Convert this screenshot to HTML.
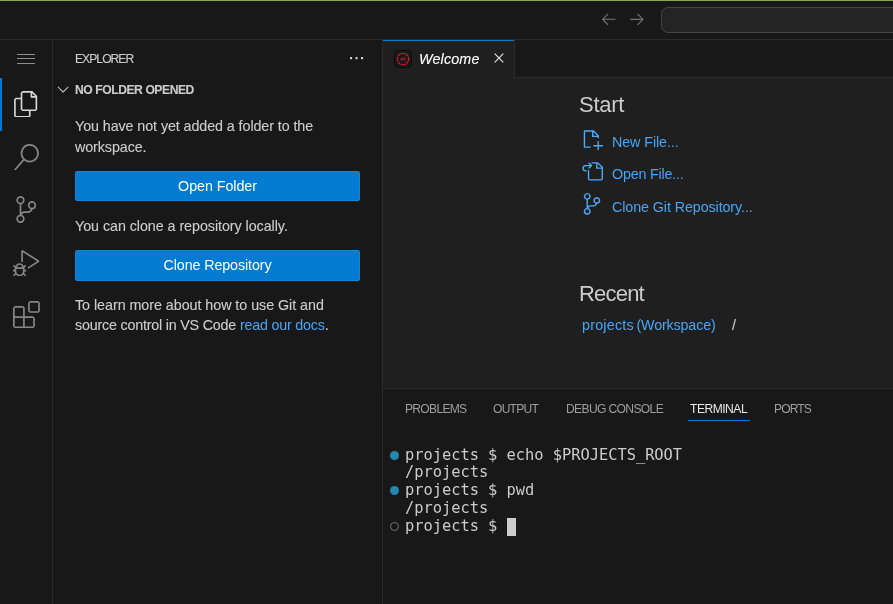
<!DOCTYPE html>
<html lang="en">
<head>
<meta charset="utf-8">
<title>Welcome</title>
<style>
*{box-sizing:border-box;margin:0;padding:0}
html,body{width:893px;height:604px;overflow:hidden;background:#181818}
body{position:relative;font-family:"Liberation Sans",sans-serif;font-size:14.3px;color:#cccccc}
.abs{position:absolute}
svg{display:block;position:absolute}
.t{-webkit-text-stroke:0.12px currentColor;position:absolute;white-space:nowrap;line-height:1;will-change:transform}
/* title bar */
#topline{left:0;top:0;width:893px;height:1px;background:#82ad4a}
#topshade{left:0;top:1px;width:893px;height:1px;background:#181818}
#titlebar{left:0;top:0;width:893px;height:40px;background:#181818;border-bottom:1px solid #2b2b2b}
#cmdcenter{left:661px;top:7px;width:260px;height:26px;background:#242424;border:1px solid #444444;border-radius:6.6px}
/* activity bar */
#activity{left:0;top:40px;width:53px;height:564px;background:#181818;border-right:1px solid #2b2b2b}
#actind{left:0;top:78px;width:2px;height:53px;background:#0078d4}
/* sidebar */
#sidebar{left:53px;top:40px;width:330px;height:564px;background:#181818;border-right:1px solid #2b2b2b}
.btn{will-change:transform;position:absolute;left:75px;width:285px;height:30px;background:#037bd1;border-radius:2.2px;color:#ffffff;text-align:center;line-height:28px;font-size:14.3px;border:1px solid rgba(255,255,255,0.07)}
.link{color:#48a5f5;-webkit-text-stroke:0}
/* editor */
#editor{left:383px;top:40px;width:510px;height:348px;background:#1f1f1f}
#tabbar{left:383px;top:40px;width:510px;height:38px;background:#181818;border-bottom:1px solid #2b2b2b}
#tab{left:383px;top:40px;width:132px;height:38px;background:#1f1f1f;border-right:1px solid #2b2b2b}
#tabtop{left:383px;top:40px;width:131px;height:1px;background:#0078d4}
/* panel */
#panel{left:383px;top:388px;width:510px;height:216px;background:#181818;border-top:1px solid #2b2b2b}
.ptab{-webkit-text-stroke:0;font-size:12.1px;color:#9d9d9d;letter-spacing:-0.68px}
.term{-webkit-text-stroke:0;font-family:"DejaVu Sans Mono","Liberation Mono",monospace;font-size:15.4px;color:#cccccc;letter-spacing:-0.03px}
</style>
</head>
<body>
<div class="abs" id="titlebar"></div>
<div class="abs" id="topline"></div>
<div class="abs" id="topshade"></div>
<div class="abs" id="cmdcenter"></div>
<!-- nav arrows -->
<svg style="left:600.1px;top:10.3px" width="17.6" height="17.6" viewBox="0 0 16 16" fill="#757575"><path d="M7 3.093l-5 5V8.8l5 5 .707-.707-4.146-4.147H14v-1H3.56L7.708 3.8 7 3.093z"/></svg>
<svg style="left:628.3px;top:10.3px" width="17.6" height="17.6" viewBox="0 0 16 16" fill="#757575"><path d="M9 13.887l5-5V8.18l-5-5-.707.707 4.146 4.147H2v1h10.44l-4.147 4.146.707.707z"/></svg>

<div class="abs" id="activity"></div>
<div class="abs" id="actind"></div>
<!-- menu -->
<svg style="left:17px;top:50px" width="18" height="16" viewBox="0 0 18 16" fill="#8e8e8e"><rect x="0" y="4" width="18" height="1"/><rect x="0" y="8" width="18" height="1"/><rect x="0" y="13" width="18" height="1"/></svg>
<!-- files -->
<svg style="left:13.2px;top:90.7px" width="26.4" height="26.8" preserveAspectRatio="none" viewBox="0 0 24 24" fill="#d7d7d7"><path d="M17.5 0h-9L7 1.5V6H2.5L1 7.500v15.070L2.500 24h12.070L16 22.570V18h4.700l1.300-1.430V4.500L17.500 0zm0 2.120l2.380 2.380H17.500V2.120zm-3 20.380h-12v-15H7v9.070L8.500 18h6v4.500zm6-6h-12v-15H16V6h4.500v10.500z"/></svg>
<!-- search -->
<svg style="left:13.2px;top:143.5px" width="26.4" height="26.8" preserveAspectRatio="none" viewBox="0 0 24 24" fill="#868686"><path d="M15.250 0a8.250 8.250 0 0 0-6.180 13.720L1 22.880l1.120 1 8.050-9.120A8.251 8.251 0 1 0 15.250.010V0zm0 15a6.750 6.750 0 1 1 0-13.500 6.750 6.750 0 0 1 0 13.500z"/></svg>
<!-- source control -->
<svg style="left:12.9px;top:195.8px" width="26.4" height="27.1" preserveAspectRatio="none" viewBox="0 0 24 24" fill="#868686"><path d="M21.007 8.222A3.738 3.738 0 0 0 15.045 5.200a3.737 3.737 0 0 0 1.156 6.583 2.988 2.988 0 0 1-2.668 1.670h-2.990a4.456 4.456 0 0 0-2.989 1.165V7.400a3.737 3.737 0 1 0-1.494 0v9.117a3.776 3.776 0 1 0 1.816.099 2.990 2.990 0 0 1 2.668-1.667h2.990a4.484 4.484 0 0 0 4.223-3.039 3.736 3.736 0 0 0 3.250-3.687zM4.565 3.738a2.242 2.242 0 1 1 4.484 0 2.242 2.242 0 0 1-4.484 0zm4.484 16.441a2.242 2.242 0 1 1-4.484 0 2.242 2.242 0 0 1 4.484 0zm8.221-9.715a2.242 2.242 0 1 1 0-4.485 2.242 2.242 0 0 1 0 4.485z"/></svg>
<!-- debug -->
<svg style="left:13.3px;top:249.9px" width="26.4" height="26.4" viewBox="0 0 24 24" fill="#868686"><path d="M10.940 13.500l-1.320 1.320a3.730 3.730 0 0 0-7.240 0L1.060 13.500 0 14.560l1.720 1.720-.220.220V18H0v1.500h1.500v.080c.077.489.214.966.410 1.420L0 22.940 1.060 24l1.650-1.650A4.308 4.308 0 0 0 6 24a4.310 4.310 0 0 0 3.290-1.650L10.940 24 12 22.940 10.090 21c.198-.464.336-.951.410-1.450v-.100H12V18h-1.500v-1.500l-.220-.220L12 14.560l-1.060-1.060zM6 13.500a2.250 2.250 0 0 1 2.250 2.250h-4.500A2.250 2.250 0 0 1 6 13.500zm3 6a3.330 3.330 0 0 1-3 3 3.330 3.330 0 0 1-3-3v-2.250h6v2.250zm14.760-9.900v1.260L13.500 17.370V15.600l8.500-5.370L9 2v9.460a5.070 5.070 0 0 0-1.500-.720V.630L8.640 0l15.120 9.600z"/></svg>
<!-- extensions -->
<svg style="left:13.2px;top:300.9px" width="26.9" height="27.1" preserveAspectRatio="none" viewBox="0 0 24 24" fill="#868686"><path d="M13.500 1.500L15 0h7.500L24 1.500V9l-1.500 1.500H15L13.500 9V1.500zm1.500 0V9h7.500V1.500H15zM0 15V6l1.500-1.500H9L10.500 6v7.500H18l1.500 1.500v7.500L18 24H1.500L0 22.500V15zm9-1.500V6H1.500v7.500H9zM9 15H1.500v7.500H9V15zm1.500 7.500H18V15h-7.500v7.500z"/></svg>

<div class="abs" id="sidebar"></div>
<div class="t" id="explorer" style="left:75px;top:53px;font-size:12.1px;letter-spacing:-0.95px;color:#cccccc">EXPLORER</div>
<svg style="left:348px;top:50px" width="18" height="16" viewBox="0 0 18 16" fill="#d0d0d0"><rect x="2" y="7" width="2.1" height="2.2"/><rect x="7.5" y="7" width="2.1" height="2.2"/><rect x="13" y="7" width="2.1" height="2.2"/></svg>
<svg style="left:53.9px;top:80.3px" width="18.4" height="18" viewBox="0 0 16 16" fill="#cccccc"><path d="M7.976 10.072l4.357-4.357.62.618L8.284 11h-.618L3 6.333l.619-.618 4.357 4.357z"/></svg>
<div class="t" id="nofolder" style="left:75px;top:84px;font-size:12.1px;font-weight:bold;letter-spacing:-0.42px">NO FOLDER OPENED</div>
<div class="t" id="p1a" style="left:75px;top:119px;letter-spacing:-0.08px">You have not yet added a folder to the</div>
<div class="t" id="p1b" style="left:75px;top:140px;letter-spacing:-0.08px">workspace.</div>
<div class="btn" id="btn1" style="top:171px;letter-spacing:-0.06px">Open Folder</div>
<div class="t" id="p2" style="left:75px;top:219px;letter-spacing:-0.05px">You can clone a repository locally.</div>
<div class="btn" id="btn2" style="top:250px;height:31px;line-height:28.6px;letter-spacing:-0.11px">Clone Repository</div>
<div class="t" id="p3a" style="left:75px;top:298px;letter-spacing:-0.04px">To learn more about how to use Git and</div>
<div class="t" id="p3b" style="left:75px;top:318px;letter-spacing:-0.2px">source control in VS Code <span class="link">read our docs</span>.</div>

<div class="abs" id="editor"></div>
<div class="abs" id="tabbar"></div>
<div class="abs" id="tab"></div>
<div class="abs" id="tabtop"></div>
<!-- tab icon -->
<svg style="left:394px;top:50px" width="18" height="18" viewBox="0 0 18 18"><rect x="0.5" y="0.5" width="17" height="17" rx="4" fill="#1a1a1a" stroke="#0b0b0b"/><circle cx="9" cy="9" r="5.7" fill="none" stroke="#f2162e" stroke-width="1.2" stroke-dasharray="2.2 0.75"/><rect x="6.6" y="7.8" width="2.1" height="2.5" fill="#a8182a"/><rect x="9.3" y="7.8" width="2.1" height="2.5" fill="#a8182a"/></svg>
<div class="t" id="welcome" style="left:419px;top:52px;font-style:italic;color:#ffffff;letter-spacing:0.18px">Welcome</div>
<svg style="left:489.7px;top:49.3px" width="18" height="18" viewBox="0 0 18 18" stroke="#e4e4e4" stroke-width="1.2" fill="none"><path d="M4.7 4.7l8.6 8.6M13.3 4.7l-8.600 8.600"/></svg>

<div class="t" id="start" style="-webkit-text-stroke:0;left:579px;top:94px;font-size:22px;letter-spacing:-0.27px">Start</div>
<!-- new file -->
<svg style="left:581.3px;top:128.6px" width="22" height="21.4" preserveAspectRatio="none" viewBox="0 0 16 16" fill="#4daafc"><path d="M9.500 1.100l3.400 3.500.100.400v2h-1V6H8V2H3v11h4v1H2.500l-.500-.500v-12l.500-.500h6.700l.300.100zM9 2v3h2.900L9 2zm4 14h-1v-3H9v-1h3V9h1v3h3v1h-3v3z"/></svg>
<div class="t link" id="newfile" style="left:611.9px;top:135px;letter-spacing:-0.08px">New File...</div>
<!-- open file -->
<svg style="left:581.4px;top:161.4px" width="22" height="20.8" preserveAspectRatio="none" viewBox="0 0 16 16" fill="#4daafc"><path d="M6 5.914l2.060-2.060v-.708L5.915 1l-.707.707.043.043.250.250 1 1h-3a2.500 2.500 0 0 0 0 5H4V7h-.500a1.500 1.500 0 1 1 0-3h3L5.207 5.293 5.914 6 6 5.914zM11 2H8.328l-1-1H12l.710.290 3 3L16 5v9l-1 1H6l-1-1V6.500l1 .847V14h9V6h-4V2zm1 0v3h3l-3-3z"/></svg>
<div class="t link" id="openfile" style="left:611.9px;top:167px;letter-spacing:-0.2px">Open File...</div>
<!-- clone -->
<svg style="left:581.4px;top:193px" width="22" height="21.8" preserveAspectRatio="none" viewBox="0 0 24 24" fill="#4daafc"><path d="M21.007 8.222A3.738 3.738 0 0 0 15.045 5.200a3.737 3.737 0 0 0 1.156 6.583 2.988 2.988 0 0 1-2.668 1.670h-2.990a4.456 4.456 0 0 0-2.989 1.165V7.400a3.737 3.737 0 1 0-1.494 0v9.117a3.776 3.776 0 1 0 1.816.099 2.990 2.990 0 0 1 2.668-1.667h2.990a4.484 4.484 0 0 0 4.223-3.039 3.736 3.736 0 0 0 3.250-3.687zM4.565 3.738a2.242 2.242 0 1 1 4.484 0 2.242 2.242 0 0 1-4.484 0zm4.484 16.441a2.242 2.242 0 1 1-4.484 0 2.242 2.242 0 0 1 4.484 0zm8.221-9.715a2.242 2.242 0 1 1 0-4.485 2.242 2.242 0 0 1 0 4.485z"/></svg>
<div class="t link" id="clonegit" style="left:611.9px;top:200px;letter-spacing:-0.09px">Clone Git Repository...</div>

<div class="t" id="recent" style="-webkit-text-stroke:0;left:579px;top:283px;font-size:22px;letter-spacing:-0.8px">Recent</div>
<div class="t link" id="projws" style="left:581.8px;top:318px;letter-spacing:-0.15px;word-spacing:-1.2px"><span style="letter-spacing:0.22px">projects</span> (Workspace)</div>
<div class="t" id="slash" style="left:732.2px;top:318px">/</div>

<div class="abs" id="panel"></div>
<div class="t ptab" id="pt1" style="left:405px;top:403px;letter-spacing:-0.72px">PROBLEMS</div>
<div class="t ptab" id="pt2" style="left:493px;top:403px;letter-spacing:-0.76px">OUTPUT</div>
<div class="t ptab" id="pt3" style="left:565.5px;top:403px;letter-spacing:-0.65px">DEBUG CONSOLE</div>
<div class="t ptab" id="pt4" style="left:690px;top:403px;letter-spacing:-0.5px;color:#e7e7e7">TERMINAL</div>
<div class="abs" id="ptu" style="left:688px;top:420px;width:62px;height:1px;background:#0078d4"></div>
<div class="t ptab" id="pt5" style="left:774px;top:403px;letter-spacing:-0.88px">PORTS</div>

<div class="abs" style="left:390.2px;top:450.7px;width:9.3px;height:9.3px;border-radius:50%;background:#2687ae"></div>
<div class="t term" id="tl1" style="left:404.5px;top:448px">projects $ echo $PROJECTS_ROOT</div>
<div class="t term" id="tl2" style="left:404.6px;top:465px">/projects</div>
<div class="abs" style="left:390.2px;top:485.8px;width:9.3px;height:9.3px;border-radius:50%;background:#2687ae"></div>
<div class="t term" id="tl3" style="left:404.6px;top:483px">projects $ pwd</div>
<div class="t term" id="tl4" style="left:404.6px;top:501px">/projects</div>
<div class="abs" style="left:390.3px;top:522.1px;width:8.9px;height:8.9px;border-radius:50%;border:1.7px solid #737373"></div>
<div class="t term" id="tl5" style="left:404.5px;top:519px">projects $</div>
<div class="abs" id="cursor" style="left:507px;top:518px;width:9px;height:18px;background:#cccccc"></div>
</body>
</html>
